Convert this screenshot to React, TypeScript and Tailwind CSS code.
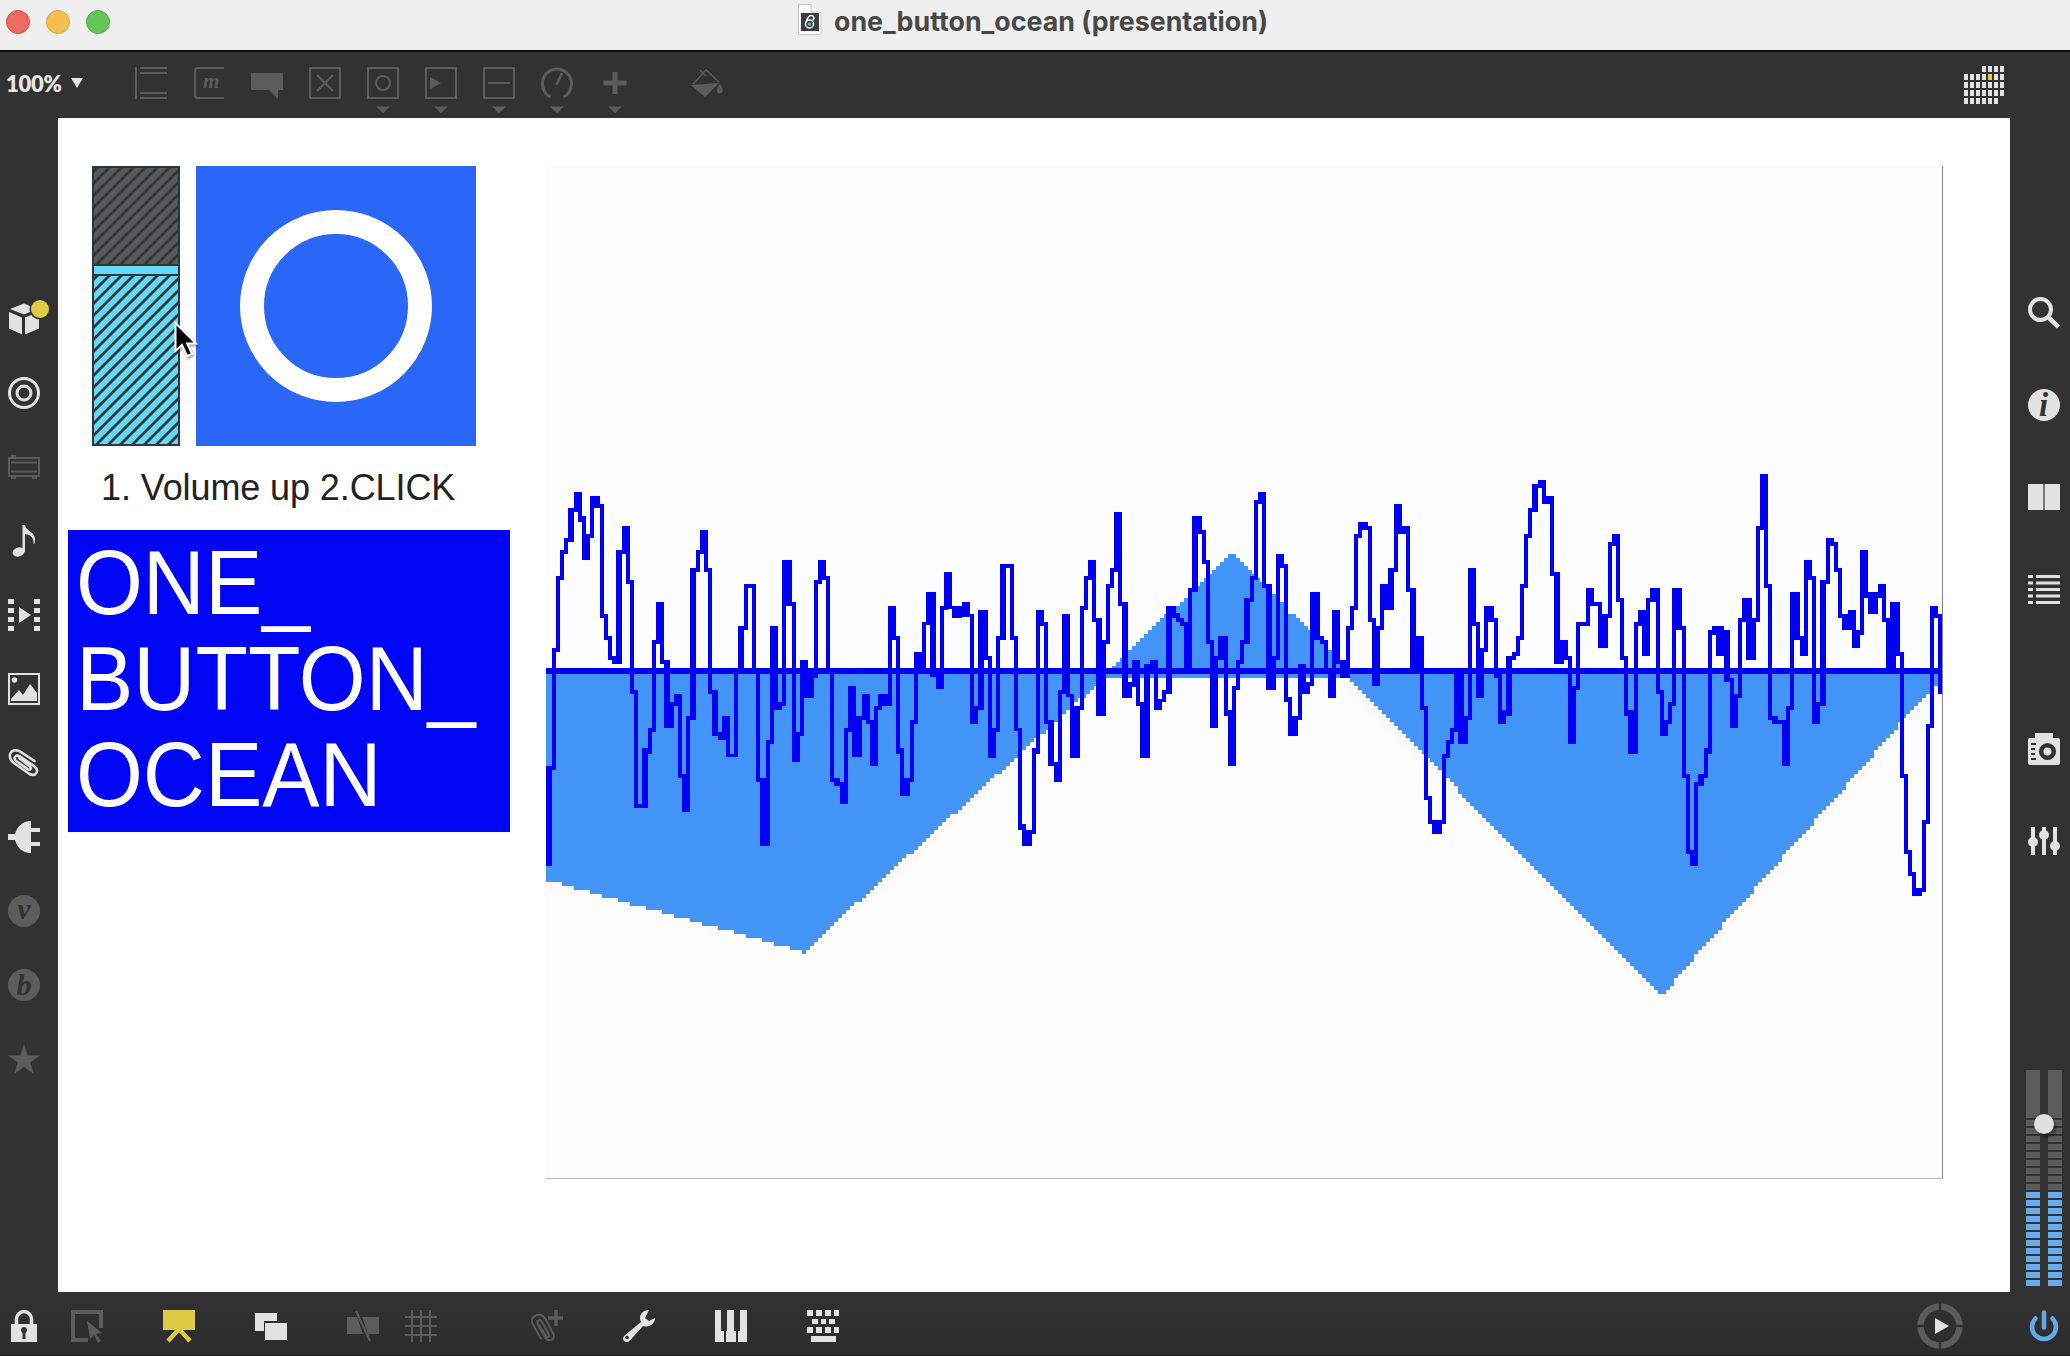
import React from "react";

type Column = [number, number, number];

type Chunk = {
    x: number;
    scaleY: number;
    end: number;
    columns: Column[];
};

/* Each column is [left, top, bottom]; a column runs until the next one starts */
const chunks: Chunk[] = [
    {
        x: 540,
        scaleY: 2.904,
        end: 1134,
        columns: [
            [18, 947, 1236], [36, 604, 958], [48, 396, 616], [60, 319, 408], [72, 285, 331], [84, 197, 296], [102, 151, 208],
            [114, 151, 238], [126, 220, 348], [138, 273, 348], [150, 163, 285], [162, 163, 197], [180, 186, 517], [192, 505, 581],
            [204, 569, 640], [216, 627, 650], [228, 319, 650], [246, 250, 331], [258, 250, 418], [270, 407, 738], [282, 726, 1069],
            [294, 1057, 1069], [306, 894, 1069], [324, 836, 911], [336, 581, 848], [348, 470, 592], [360, 470, 650], [372, 639, 836],
            [390, 760, 836], [402, 738, 772], [414, 738, 981], [426, 969, 1080], [438, 801, 1080], [450, 372, 812], [468, 319, 383],
            [480, 261, 331], [492, 261, 383], [504, 372, 738], [516, 726, 859], [534, 848, 871], [546, 801, 871], [558, 801, 922],
            [570, 911, 922], [582, 662, 922], [594, 540, 680], [612, 418, 552], [624, 418, 430], [636, 418, 680], [648, 662, 993],
            [660, 981, 1179], [678, 871, 1179], [690, 540, 882], [702, 540, 784], [714, 760, 784], [726, 348, 772], [738, 348, 482],
            [756, 470, 935], [768, 848, 935], [780, 639, 859], [792, 639, 749], [804, 662, 749], [822, 407, 691], [834, 348, 418],
            [846, 348, 407], [858, 395, 680], [870, 662, 993], [882, 981, 1005], [900, 993, 1057], [912, 836, 1057], [924, 714, 848],
            [936, 714, 922], [948, 801, 922], [966, 738, 812], [978, 738, 825], [990, 813, 947], [1002, 772, 947], [1014, 738, 784],
            [1026, 738, 772], [1044, 482, 772], [1056, 482, 581], [1068, 569, 911], [1080, 894, 1034], [1092, 981, 1034],
            [1110, 813, 993], [1122, 616, 825],
        ],
    },
    {
        x: 900,
        scaleY: 3,
        end: 1140,
        columns: [
            [54, 637, 700], [66, 547, 700], [78, 456, 556], [90, 456, 712], [108, 690, 748], [120, 498, 748], [132, 396, 510],
            [144, 396, 508], [156, 498, 534], [186, 486, 532], [198, 486, 532], [210, 522, 852], [222, 798, 852], [234, 510, 810],
            [252, 510, 660], [264, 648, 954], [276, 864, 954], [288, 588, 876], [300, 372, 600], [318, 372, 384], [330, 372, 600],
            [342, 588, 874], [354, 864, 1170], [366, 1152, 1218], [378, 1170, 1218], [396, 924, 1182], [408, 510, 942],
            [420, 510, 558], [432, 546, 852], [444, 840, 978], [462, 966, 1026], [474, 750, 1026], [486, 522, 762], [498, 522, 772],
            [510, 762, 954], [522, 798, 954], [540, 498, 810], [552, 408, 510], [564, 360, 420], [576, 360, 546], [588, 534, 828],
            [606, 600, 828], [618, 432, 612], [630, 384, 444], [642, 216, 396], [654, 216, 498], [666, 486, 774], [684, 726, 774],
            [696, 660, 740], [708, 660, 798], [720, 786, 954], [732, 672, 954], [750, 660, 684], [762, 660, 810], [774, 778, 810],
            [786, 750, 786], [798, 498, 762], [816, 498, 534], [828, 520, 546], [840, 534, 558], [852, 546, 700], [864, 444, 700],
            [876, 228, 456], [894, 228, 282], [906, 270, 372], [918, 360, 612], [930, 600, 864], [942, 648, 864], [954, 588, 660],
            [972, 588, 828], [984, 810, 978], [996, 738, 978], [1008, 660, 750], [1020, 600, 672], [1032, 474, 612], [1050, 408, 486],
            [1062, 180, 420], [1074, 156, 192], [1086, 156, 444], [1098, 432, 750], [1116, 648, 750], [1128, 342, 660],
        ],
    },
    {
        x: 1260,
        scaleY: 2.7034,
        end: 1122,
        columns: [
            [60, 308, 346], [72, 336, 708], [84, 696, 800], [96, 745, 800], [114, 606, 756], [126, 606, 686], [138, 654, 686],
            [150, 411, 665], [162, 411, 540], [180, 530, 552], [192, 540, 630], [204, 616, 697], [216, 460, 697], [228, 460, 606],
            [240, 595, 643], [258, 503, 643], [270, 449, 514], [282, 254, 460], [294, 222, 265], [306, 222, 243], [324, 232, 492],
            [336, 481, 665], [348, 503, 665], [360, 389, 514], [372, 389, 460], [384, 346, 460], [402, 173, 357], [414, 173, 254],
            [426, 232, 254], [438, 232, 411], [450, 400, 633], [468, 530, 633], [480, 530, 730], [492, 720, 973], [504, 962, 1037],
            [516, 1027, 1065], [546, 849, 1037], [558, 812, 860], [570, 779, 822], [582, 616, 790], [594, 616, 822], [612, 745, 822],
            [624, 346, 756], [636, 346, 502], [648, 492, 697], [660, 562, 697], [672, 449, 573], [684, 449, 492], [702, 481, 643],
            [714, 630, 768], [726, 730, 768], [738, 584, 747], [756, 573, 595], [768, 530, 584], [780, 389, 540], [792, 254, 400],
            [804, 184, 265], [816, 119, 195], [834, 108, 130], [846, 108, 173], [858, 151, 173], [870, 151, 368], [882, 357, 606],
            [900, 540, 606], [912, 540, 595], [924, 584, 822], [936, 665, 822], [948, 492, 676], [960, 492, 503], [978, 400, 503],
            [990, 400, 449], [1002, 438, 449], [1014, 438, 562], [1026, 471, 562], [1044, 276, 482], [1056, 254, 287],
            [1068, 254, 438], [1080, 427, 595], [1092, 584, 747], [1104, 730, 849],
        ],
    },
    {
        x: 1600,
        scaleY: 2.7034,
        end: 1026,
        columns: [
            [102, 492, 849], [114, 460, 503], [126, 460, 584], [138, 427, 584], [150, 400, 438], [168, 400, 686], [180, 676, 800],
            [192, 757, 800], [204, 708, 768], [216, 400, 719], [228, 400, 514], [246, 503, 914], [258, 903, 1118], [270, 1108, 1152],
            [282, 925, 1152], [294, 903, 935], [312, 833, 914], [324, 514, 849], [336, 503, 528], [348, 503, 584], [372, 514, 654],
            [390, 643, 778], [402, 686, 778], [414, 481, 697], [426, 427, 492], [438, 427, 595], [456, 481, 595], [468, 232, 492],
            [480, 92, 243], [492, 92, 400], [504, 389, 756], [516, 745, 768], [534, 757, 768], [546, 757, 881], [558, 719, 881],
            [570, 411, 730], [582, 411, 540], [600, 530, 584], [612, 324, 584], [624, 324, 378], [636, 368, 768], [648, 708, 768],
            [660, 378, 719], [678, 265, 389], [690, 265, 287], [702, 276, 357], [714, 346, 481], [726, 470, 514], [744, 460, 514],
            [756, 460, 562], [768, 514, 562], [780, 297, 528], [792, 297, 427], [804, 411, 470], [834, 389, 427], [846, 389, 492],
            [858, 481, 620], [870, 438, 620], [888, 438, 584], [900, 573, 914], [912, 903, 1118], [924, 1108, 1179],
            [936, 1168, 1232], [948, 1211, 1232], [966, 1027, 1222], [978, 768, 1037], [990, 449, 778], [1002, 449, 482],
            [1014, 470, 686],
        ],
    },
];

const tracePath = chunks
    .map(({ x, scaleY, end, columns }) =>
        columns
            .map(([left, top, bottom], i) => {
                const right = i + 1 < columns.length ? columns[i + 1][0] : end;
                const y0 = Math.round(440 + top / scaleY);
                const y1 = Math.round(440 + bottom / scaleY);
                return `M${x + left / 3} ${y0}H${x + right / 3}V${y1}H${x + left / 3}Z`;
            })
            .join("")
    )
    .join("");

/* Swell envelopes, drawn as 4px stairs */
function stairs(points: number[][], base: number) {
    const last = points[points.length - 1][0];
    let d = `M${points[0][0]} ${base}`;
    for (let x = points[0][0]; x < last; x += 4) {
        const mid = Math.min(x + 2, last);
        const i = Math.max(1, points.findIndex((p) => p[0] >= mid));
        const [x0, y0] = points[i - 1];
        const [x1, y1] = points[i];
        const y = Math.round((y0 + ((mid - x0) / (x1 - x0)) * (y1 - y0) - 2) / 4) * 4 + 2;
        d += `V${y}H${Math.min(x + 4, last)}`;
    }
    return d + `V${base}Z`;
}

const swells = [
    stairs([[546, 880], [804, 952], [900, 863], [1094, 687], [1104, 678], [1350, 678], [1420, 748], [1460, 792], [1520, 853], [1640, 972], [1662, 996], [1706, 944], [1860, 770], [1908, 714], [1930, 694], [1942, 680]], 670),
    stairs([[1112, 668], [1128, 652], [1216, 568], [1234, 552], [1290, 612], [1332, 650], [1348, 668]], 670),
];

function Scope() {
    return (
        <svg viewBox="546 166 1396 1011" width="1396" height="1011" shapeRendering="crispEdges">
            {swells.map((d) => (
                <path key={d} d={d} fill="#4294f6" />
            ))}
            <path d={tracePath} fill="#0000f3" />
            <rect x="546" y="668" width="1396" height="6" fill="#0000f3" />
        </svg>
    );
}

const tones = {
    light: "text-[#e2e2e2]",
    dim: "text-[#5c5c5c]",
    yellow: "text-[#e0cb45]",
    blue: "text-[#64a8e8]",
};

type IconProps = {
    children: React.ReactNode;
    tone?: keyof typeof tones;
    className?: string;
};

function Icon({ children, tone = "light", className = "" }: IconProps) {
    return (
        <svg viewBox="0 0 32 32" className={`h-8 w-8 shrink-0 overflow-visible fill-none stroke-none ${tones[tone]} ${className}`}>
            {children}
        </svg>
    );
}

const line = { stroke: "currentColor", strokeWidth: 2 };
const solid = { fill: "currentColor" };
const arrow = <path d="M9 39.500h14l-7 7z" {...solid} />;

function TitleBar() {
    return (
        <header className="relative flex h-[50px] shrink-0 items-center justify-center bg-[#efefef]">
            <div className="absolute left-1.5 top-2.5 flex gap-4">
                <span className="h-6 w-6 rounded-full border border-[#d65248] bg-[#ed6a5f]" />
                <span className="h-6 w-6 rounded-full border border-[#dda53c] bg-[#f5bf50]" />
                <span className="h-6 w-6 rounded-full border border-[#52a842] bg-[#62c656]" />
            </div>
            <div className="flex -translate-x-[2px] items-center gap-3">
                <svg viewBox="0 0 24 32" className="-mt-2.5 h-8 w-6">
                    <path d="M.5.5H13L23 9v21.500H.5z" fill="#fff" stroke="#c6c6c6" />
                    <path d="M13 .5V8h10" fill="#f4f4f4" stroke="#c6c6c6" />
                    <path d="M3 9h18v18H3z" fill="#3c3c3c" />
                    <circle cx="11.500" cy="20" r="4" fill="none" stroke="#fff" strokeWidth="1.500" />
                    <path d="M8 18.500c1-3 2-7 5-7s4 3 1.500 5" fill="none" stroke="#fff" strokeWidth="1.500" />
                    <circle cx="11.500" cy="20" r="1.500" fill="#5fd0dc" />
                </svg>
                <h1 className="-mt-2 whitespace-nowrap font-[Inter,sans-serif] text-[26.75px] font-bold leading-8 text-[#484848]">
                    one_button_ocean (presentation)
                </h1>
            </div>
        </header>
    );
}

function Toolbar() {
    return (
        <div className="flex h-[68px] shrink-0 items-start border-t-2 border-[#0c0c0c] pt-[15px]">
            <div className="flex h-8 w-[135px] shrink-0 items-center gap-2.5 pl-1.5 font-[Lato,sans-serif] text-[22px] font-extrabold text-[#e6e6e6]">
                <span className="tracking-[-0.3px]">100%</span>
                <svg viewBox="0 0 12 10" className="h-2.5 w-3 fill-[#e6e6e6]">
                    <path d="M0 0h12L6 10z" />
                </svg>
            </div>
            <div className="flex gap-[26px]">
                <Icon tone="dim">
                    <path d="M1 0v32M5 1h27M5 6h27M5 26h27M5 31h27" {...line} />
                </Icon>
                <Icon tone="dim">
                    <path d="M31 1H5Q2 1 2 4v24q0 3 3 3h26" {...line} />
                    <text x="10" y="21" className="fill-[#5c5c5c] font-['Liberation_Serif',serif] text-[21px] font-bold italic">m</text>
                </Icon>
                <Icon tone="dim">
                    <path d="M0 6h32v17h-5v9l-9-9H0z" {...solid} />
                </Icon>
                <Icon tone="dim">
                    <path d="M1 1h30v30H1zM8 8l16 16M24 8L8 24" {...line} />
                </Icon>
                <Icon tone="dim">
                    <path d="M1 1h30v30H1z" {...line} />
                    <circle cx="16" cy="16" r="7" {...line} />
                    {arrow}
                </Icon>
                <Icon tone="dim">
                    <path d="M1 1h30v30H1z" {...line} />
                    <path d="M5 10l11 6-11 6z" {...solid} />
                    {arrow}
                </Icon>
                <Icon tone="dim">
                    <path d="M1 1h30v30H1zM5 16h22" {...line} />
                    {arrow}
                </Icon>
                <Icon tone="dim">
                    <path d="M9.500 30C4.500 27.500 1.500 22.500 1.500 16.500a14.500 14.500 0 0 1 29 0c0 6-3 11-8 13.500" stroke="currentColor" strokeWidth="3" />
                    <path d="M15.500 18L21 6" stroke="currentColor" strokeWidth="2.500" />
                    {arrow}
                </Icon>
                <Icon tone="dim">
                    <path d="M16 5v22M4.500 16h23" stroke="currentColor" strokeWidth="5" />
                    {arrow}
                </Icon>
                <Icon tone="dim" className="ml-[34px]">
                    <path d="M2 17L15 3l13 12M9 3l6 6" stroke="currentColor" strokeWidth="1.500" />
                    <path d="M0 18l28-2-14 14z" {...solid} />
                    <path d="M29 17c3 4 4 9 0 9.500s-4-4 0-9.500z" {...solid} />
                </Icon>
            </div>
            <div className="-mt-px ml-auto mr-[66px] grid grid-cols-[repeat(7,4px)] gap-0.5">
                {Array.from({ length: 35 }, (_, i) => (
                    <span
                        key={i}
                        className={`h-1.5 ${i < 3 || i === 34 ? "" : i === 11 ? "bg-[#e0cb45]" : "bg-[#e2e2e2]"}`}
                    />
                ))}
            </div>
        </div>
    );
}

const clipPath = "M11 11l11 8.500c2 1.500.5 4-2 2.800L8.500 14.200c-4-3-1-7 3-5L26 19c6 4.500 2 11-4.500 8L6.500 16.500C-2 10 2.500 0 11.500 4.200L26.500 14";

function LeftBar() {
    return (
        <nav className="flex w-[58px] shrink-0 flex-col gap-[42px] pl-2 pt-[185px]">
            <Icon>
                <path d="M2 6l14-5.500L29 6l-13 5.500zM1 9l13 5.500v17L1 25.500zM31 9l-14 5.500v17l14-6z" {...solid} />
                <circle cx="32" cy="6" r="10.500" fill="#323232" />
                <circle cx="32" cy="6" r="9" fill="#e0cb45" />
            </Icon>
            <Icon>
                <circle cx="16" cy="16" r="14.500" stroke="currentColor" strokeWidth="3" />
                <circle cx="16" cy="16" r="7" stroke="currentColor" strokeWidth="3" />
            </Icon>
            <Icon tone="dim">
                <path d="M1 7h30v18H1zM3 11.500h26M3 20.500h26M3 5h5M3 27h5M24 27h5" {...line} />
            </Icon>
            <Icon>
                <ellipse cx="10.500" cy="27" rx="6" ry="4.500" transform="rotate(-15 10.500 27)" {...solid} />
                <path d="M14.500 0h2.500c1 6 10 7 10 14 0 3-.5 5-1.500 5 .5-5-1.500-9-8.500-10v18h-2.500z" {...solid} />
            </Icon>
            <Icon>
                <path d="M0 0h6v5H0zM0 9h6v5H0zM0 18h6v5H0zM0 27h6v5H0zM26 0h6v5h-6zM26 9h6v5h-6zM26 18h6v5h-6zM26 27h6v5h-6zM11 8l12 8-12 8z" {...solid} />
            </Icon>
            <Icon>
                <path d="M1 1h30v30H1z" {...line} />
                <circle cx="6.500" cy="7" r="2.800" {...solid} />
                <path d="M3 28v-2l8-9 4 5 7-11 7 9v8z" {...solid} />
            </Icon>
            <Icon>
                <path d={clipPath} stroke="currentColor" strokeWidth="2.500" strokeLinecap="round" />
            </Icon>
            <Icon>
                <path d="M0 13h7c2-7 7-13 16-13v7h9v4h-9v10h9v4h-9v7c-9 0-14-6-16-13H0z" {...solid} />
            </Icon>
            <Icon tone="dim">
                <circle cx="16" cy="16" r="16" {...solid} />
                <text x="16" y="24" textAnchor="middle" className="fill-[#323232] font-['Liberation_Serif',serif] text-[29px] font-bold italic">v</text>
            </Icon>
            <Icon tone="dim">
                <circle cx="16" cy="16" r="16" {...solid} />
                <text x="16" y="26" textAnchor="middle" className="fill-[#323232] font-['Liberation_Serif',serif] text-[30px] font-bold italic">b</text>
            </Icon>
            <Icon tone="dim">
                <path d="M16 1l3.800 11.500H32l-9.800 7L26 31l-10-7-10 7 3.800-11.500L0 12.500h12.200z" {...solid} />
            </Icon>
        </nav>
    );
}

function Meter() {
    return (
        <div className="flex flex-col">
            <div className="h-12 bg-[#5c5c5c]" />
            {Array.from({ length: 21 }, (_, i) => (
                <div key={i} className={`mt-0.5 h-1.5 ${i < 9 ? "bg-[#5c5c5c]" : "bg-[#66adec]"}`} />
            ))}
        </div>
    );
}

function RightBar() {
    return (
        <nav className="flex w-[60px] shrink-0 flex-col pl-[18px] pt-[179px]">
            <div className="flex flex-col gap-[60px]">
                <Icon>
                    <circle cx="12.500" cy="12.500" r="10.500" stroke="currentColor" strokeWidth="4" />
                    <path d="M20 20l10.500 10" stroke="currentColor" strokeWidth="4.500" />
                </Icon>
                <Icon>
                    <circle cx="16" cy="16" r="16" {...solid} />
                    <text x="15.500" y="27" textAnchor="middle" className="fill-[#323232] font-['Liberation_Serif',serif] text-[33px] font-bold italic">i</text>
                </Icon>
                <Icon>
                    <path d="M0 3h15v26H0zM17 3h15v26H17z" {...solid} />
                    <path d="M15 3h2v26h-2z" fill="#777" />
                </Icon>
                <Icon>
                    <path d="M0 3.500h5M8 3.500h24M0 10h5M8 10h24M0 16.500h5M8 16.500h24M0 23h5M8 23h24M0 29.500h5M8 29.500h24" stroke="currentColor" strokeWidth="3" />
                </Icon>
            </div>
            <div className="mt-[128px] flex flex-col gap-[60px]">
                <Icon>
                    <path d="M7 0h18v5h5q2 0 2 2v23q0 2-2 2H2q-2 0-2-2V7q0-2 2-2h5z" {...solid} />
                    <circle cx="19.500" cy="18.500" r="6.300" stroke="#323232" strokeWidth="4.500" />
                    <path d="M3 11h5M3 16h4M3 21h4M3 26h5" stroke="#323232" strokeWidth="2" />
                </Icon>
                <Icon>
                    <path d="M5 2v28M16 2v28M27 2v28" stroke="currentColor" strokeWidth="4" />
                    <circle cx="5" cy="17" r="5" {...solid} />
                    <circle cx="16" cy="10" r="5" {...solid} />
                    <circle cx="27" cy="21" r="5" {...solid} />
                </Icon>
            </div>
            <div className="relative -ml-0.5 mt-[213px] grid w-9 grid-cols-[14px_14px] gap-2">
                <Meter />
                <Meter />
                <span className="absolute left-2 top-11 h-5 w-5 rounded-full bg-[#e0e0e0] shadow-[3px_4px_2px_rgba(0,0,0,0.3)]" />
            </div>
        </nav>
    );
}

function VolumeSlider() {
    return (
        <svg viewBox="0 0 88 280" className="h-[280px] w-[88px]">
            <defs>
                <pattern id="stripes" width="12" height="12" patternUnits="userSpaceOnUse" patternTransform="translate(7 0)">
                    <path d="M-3 3L3-3M-3 15L15-3M9 15L15 9" stroke="#2f3538" strokeWidth="2.800" />
                </pattern>
            </defs>
            <path d="M0 0h88v280H0z" fill="#595959" />
            <path d="M0 98h88v182H0z" fill="#63dbf8" />
            <path d="M0 0h88v98H0zM0 109h88v171H0z" fill="url(#stripes)" />
            <path d="M1 1h86v278H1zM0 99h88M0 109h88" fill="none" stroke="#2f3538" strokeWidth="2" />
        </svg>
    );
}

function Patch() {
    return (
        <main className="relative flex w-[1952px] shrink-0 bg-[#fefefe]">
            <section className="flex w-[488px] shrink-0 flex-col pl-[10px] pt-12">
                <div className="ml-6 flex gap-4">
                    <VolumeSlider />
                    <button className="flex h-[280px] w-[280px] items-center justify-center bg-[#2b67f6]">
                        <span className="h-48 w-48 rounded-full border-[24px] border-white" />
                    </button>
                </div>
                <p className="ml-[33px] mt-[21px] h-[63px] whitespace-nowrap font-['Liberation_Sans',Arial,sans-serif] text-[36px] leading-[42px] tracking-[-0.1px] text-[#222]">
                    1. Volume up 2.CLICK
                </p>
                <h2 className="h-[302px] w-[442px] bg-[#0006f5] pl-2 pt-[5px] font-['Liberation_Sans',Arial,sans-serif] text-[90px] leading-[96px] text-white">
                    <span className="inline-block origin-left scale-x-[0.955]">
                        ONE_
                        <br />
                        BUTTON_
                        <br />
                        OCEAN
                    </span>
                </h2>
            </section>
            <div className="mt-12 h-[1013px] w-[1397px] border-b border-r border-b-[#b9b9b9] border-r-[#858585] bg-[#fcfcfc]">
                <Scope />
            </div>
            {/* Mouse pointer */}
            <svg viewBox="0 0 26 40" className="absolute left-[116px] top-[203px] h-10 w-[26px] drop-shadow-[1px_2px_1px_rgba(0,0,0,0.35)]">
                <path d="M1.500 2v28l6.500-6 5 11 5-2.200-4.800-10.300H22z" fill="#000" stroke="#fff" strokeWidth="2" />
            </svg>
        </main>
    );
}

function BottomBar() {
    return (
        <footer className="flex h-16 shrink-0 items-center border-b border-[#241c1e] bg-linear-to-b from-[#323232] to-[#2c2c2c] pl-2 pt-1">
            <Icon>
                <path d="M3 14h26v18H3z" {...solid} />
                <path d="M8.500 15V9a7.500 7.500 0 0 1 15 0v6" stroke="currentColor" strokeWidth="3.500" />
                <circle cx="16" cy="20" r="3" fill="#323232" />
                <path d="M14.500 20h3v9h-3z" fill="#323232" />
            </Icon>
            <Icon tone="dim" className="ml-[31px]">
                <path d="M17 30H2V2h28v16" stroke="currentColor" strokeWidth="4" />
                <path d="M16 11l15 12-6 1 5 7-3 2-4-8-4 4z" {...solid} />
            </Icon>
            <Icon tone="yellow" className="ml-[60px]">
                <path d="M0 0h32v20H0z" {...solid} />
                <path d="M16 19L5 31M16 19l11 12" stroke="currentColor" strokeWidth="4.500" />
            </Icon>
            <Icon className="ml-[60px]">
                <path d="M0 3h22v8H9v10H0z" {...solid} />
                <path d="M10 13h22v17H10z" {...solid} />
            </Icon>
            <Icon tone="dim" className="ml-[60px]">
                <path d="M0 7h10l6 17H0zM15 7h17v17H21z" {...solid} />
                <path d="M9 1l14 30" stroke="currentColor" strokeWidth="2" />
            </Icon>
            <Icon tone="dim" className="ml-[26px]">
                <path d="M7 0v32M16 0v32M25 0v32M0 7h32M0 16h32M0 25h32" {...line} />
            </Icon>
            <Icon tone="dim" className="ml-[94px]">
                <path
                    d="M8 15l7 11c1.500 2 4 1 3-1.500L11 12c-2-3.500-5.500-1.500-4.500 1.500L14 27c2.500 5 9 4 9-2L15 10C10 1 1 5 .8 12L10 29"
                    stroke="currentColor"
                    strokeWidth="2"
                />
                <path d="M25 0v16M17 8h15" stroke="currentColor" strokeWidth="3.500" />
            </Icon>
            <Icon className="ml-[60px]">
                <path
                    d="M26 0c-7 0-11 6-8 12L1 26c-3 4 2 8 5.500 5L20 16c6 2 12-2 12-8l-6 3-4-3z"
                    {...solid}
                />
                <circle cx="4" cy="27.500" r="1.800" fill="#323232" />
            </Icon>
            <Icon className="ml-[60px]">
                <path d="M0 0h6v21h3v11H0zM12 0h7v21h2v11H11V21h1zM25 0h7v32h-9V21h2z" {...solid} />
            </Icon>
            <Icon className="ml-[60px]">
                <path d="M0 0h6v6H0zM9 0h6v6H9zM18 0h6v6h-6zM27 0h5v6h-5zM5 9h6v5H5zM14 9h5v5h-5zM22 9h6v5h-6zM0 17h6v6H0zM9 17h6v6H9zM18 17h6v6h-6zM27 17h5v6h-5zM4 26h25v6H4z" {...solid} />
            </Icon>
            <svg viewBox="0 0 46 46" className="ml-auto h-[46px] w-[46px]">
                <circle cx="23" cy="23" r="19.500" fill="none" stroke="#5c5c5c" strokeWidth="6.500" />
                <path d="M23 0v8M23 38v8M0 23h8M38 23h8" stroke="#303030" strokeWidth="2.500" />
                <path d="M18 15l14 8-14 8z" fill="#e2e2e2" />
            </svg>
            <Icon tone="blue" className="ml-[65px] mr-2.5">
                <path d="M7.500 8.500a12 12 0 1 0 17 0" stroke="currentColor" strokeWidth="4.500" strokeLinecap="round" />
                <path d="M16 2.500v15" stroke="currentColor" strokeWidth="4.500" strokeLinecap="round" />
            </Icon>
        </footer>
    );
}

export default function App() {
    return (
        <div className="flex h-[1356px] w-[2070px] flex-col overflow-hidden bg-[#323232]">
            <TitleBar />
            <Toolbar />
            <div className="flex h-[1174px] shrink-0">
                <LeftBar />
                <Patch />
                <RightBar />
            </div>
            <BottomBar />
        </div>
    );
}
